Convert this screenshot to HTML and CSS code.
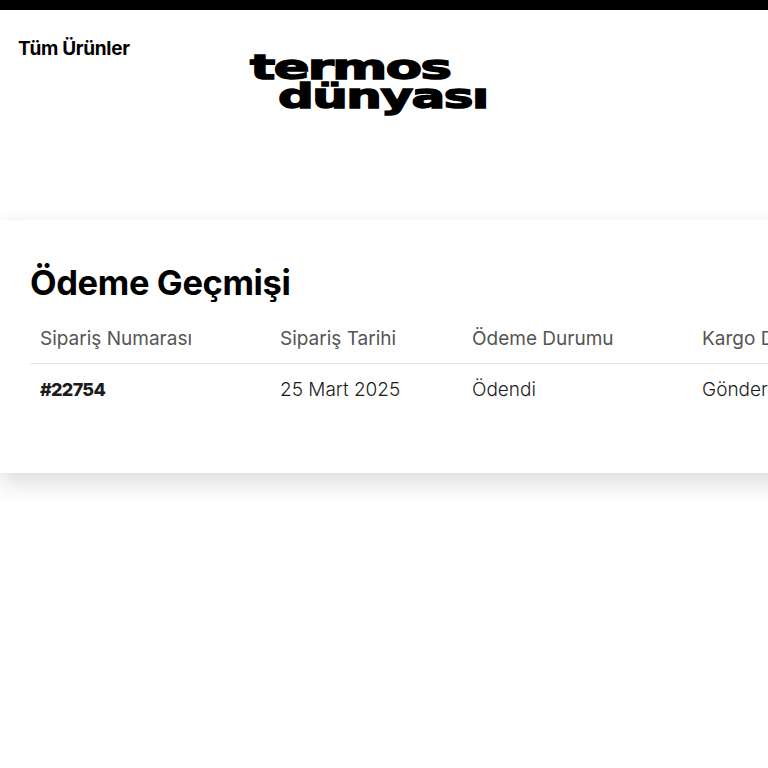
FILE: index.html
```html
<!DOCTYPE html>
<html lang="tr">
<head>
<meta charset="utf-8">
<title>Ödeme Geçmişi</title>
<link rel="stylesheet" href="styles.css">
</head>
<body>
<div class="topbar"></div>
<header class="header">
  <a class="nav-link">Tüm Ürünler</a>
  <div class="logo">
    <span class="logo-line logo-first">termos</span>
    <span class="logo-line logo-second">dünyası</span>
  </div>
</header>
<main class="card">
  <h1 class="title">Ödeme Geçmişi</h1>
  <div class="table">
    <div class="row row-head">
      <div>Sipariş Numarası</div>
      <div>Sipariş Tarihi</div>
      <div>Ödeme Durumu</div>
      <div>Kargo Durumu</div>
    </div>
    <div class="row row-body">
      <div class="order-no">#22754</div>
      <div>25 Mart 2025</div>
      <div>Ödendi</div>
      <div>Gönderildi</div>
    </div>
  </div>
</main>
</body>
</html>
```
FILE: styles.css
```css
* { box-sizing: border-box; }
html, body { margin: 0; height: 768px; overflow: hidden; background: #fff; }
body { font-family: "Inter", "Lato", sans-serif; color: #111; }
.topbar { height: 10px; background: #000; }
.header { height: 210px; padding: 28px 18px 0; display: flex; align-items: flex-start; }
.nav-link { font-size: 19px; line-height: 21px; font-weight: 700; letter-spacing: -0.3px; color: #000; width: 232px; flex: none; }
.logo { display: flex; flex-direction: column; align-items: flex-start; padding-top: 15px; font-family: "DejaVu Sans", sans-serif; font-weight: 700; color: #000; }
.logo-line { display: block; font-size: 33px; line-height: 29px; transform-origin: left center; letter-spacing: -1px; -webkit-text-stroke: 1.4px #000; white-space: nowrap; }
.logo-first { transform: scaleX(1.6); }
.logo-second { margin-left: 28px; transform: scaleX(1.515); }
.card { width: 1100px; height: 253px; background: #fff; padding: 41px 30px 0; box-shadow: 0 10px 22px rgba(0,0,0,.14), 0 -2px 8px rgba(0,0,0,.02); }
.title { margin: 0; font-size: 34.5px; line-height: 44px; font-weight: 700; letter-spacing: -0.37px; color: #000; }
.table { width: 1040px; margin-top: 14px; }
.row { display: grid; grid-template-columns: 240px 192px 230px 1fr; padding: 0 10px; }
.row-head { height: 45px; align-items: center; border-bottom: 1px solid #e4e4e4; font-size: 19px; font-weight: 400; color: #555; padding-bottom: 5px; }
.row-body { height: 50px; align-items: center; font-size: 19px; font-weight: 300; color: #1c1c1c; }
.order-no { font-weight: 800; font-size: 18px; letter-spacing: -0.7px; }
```
